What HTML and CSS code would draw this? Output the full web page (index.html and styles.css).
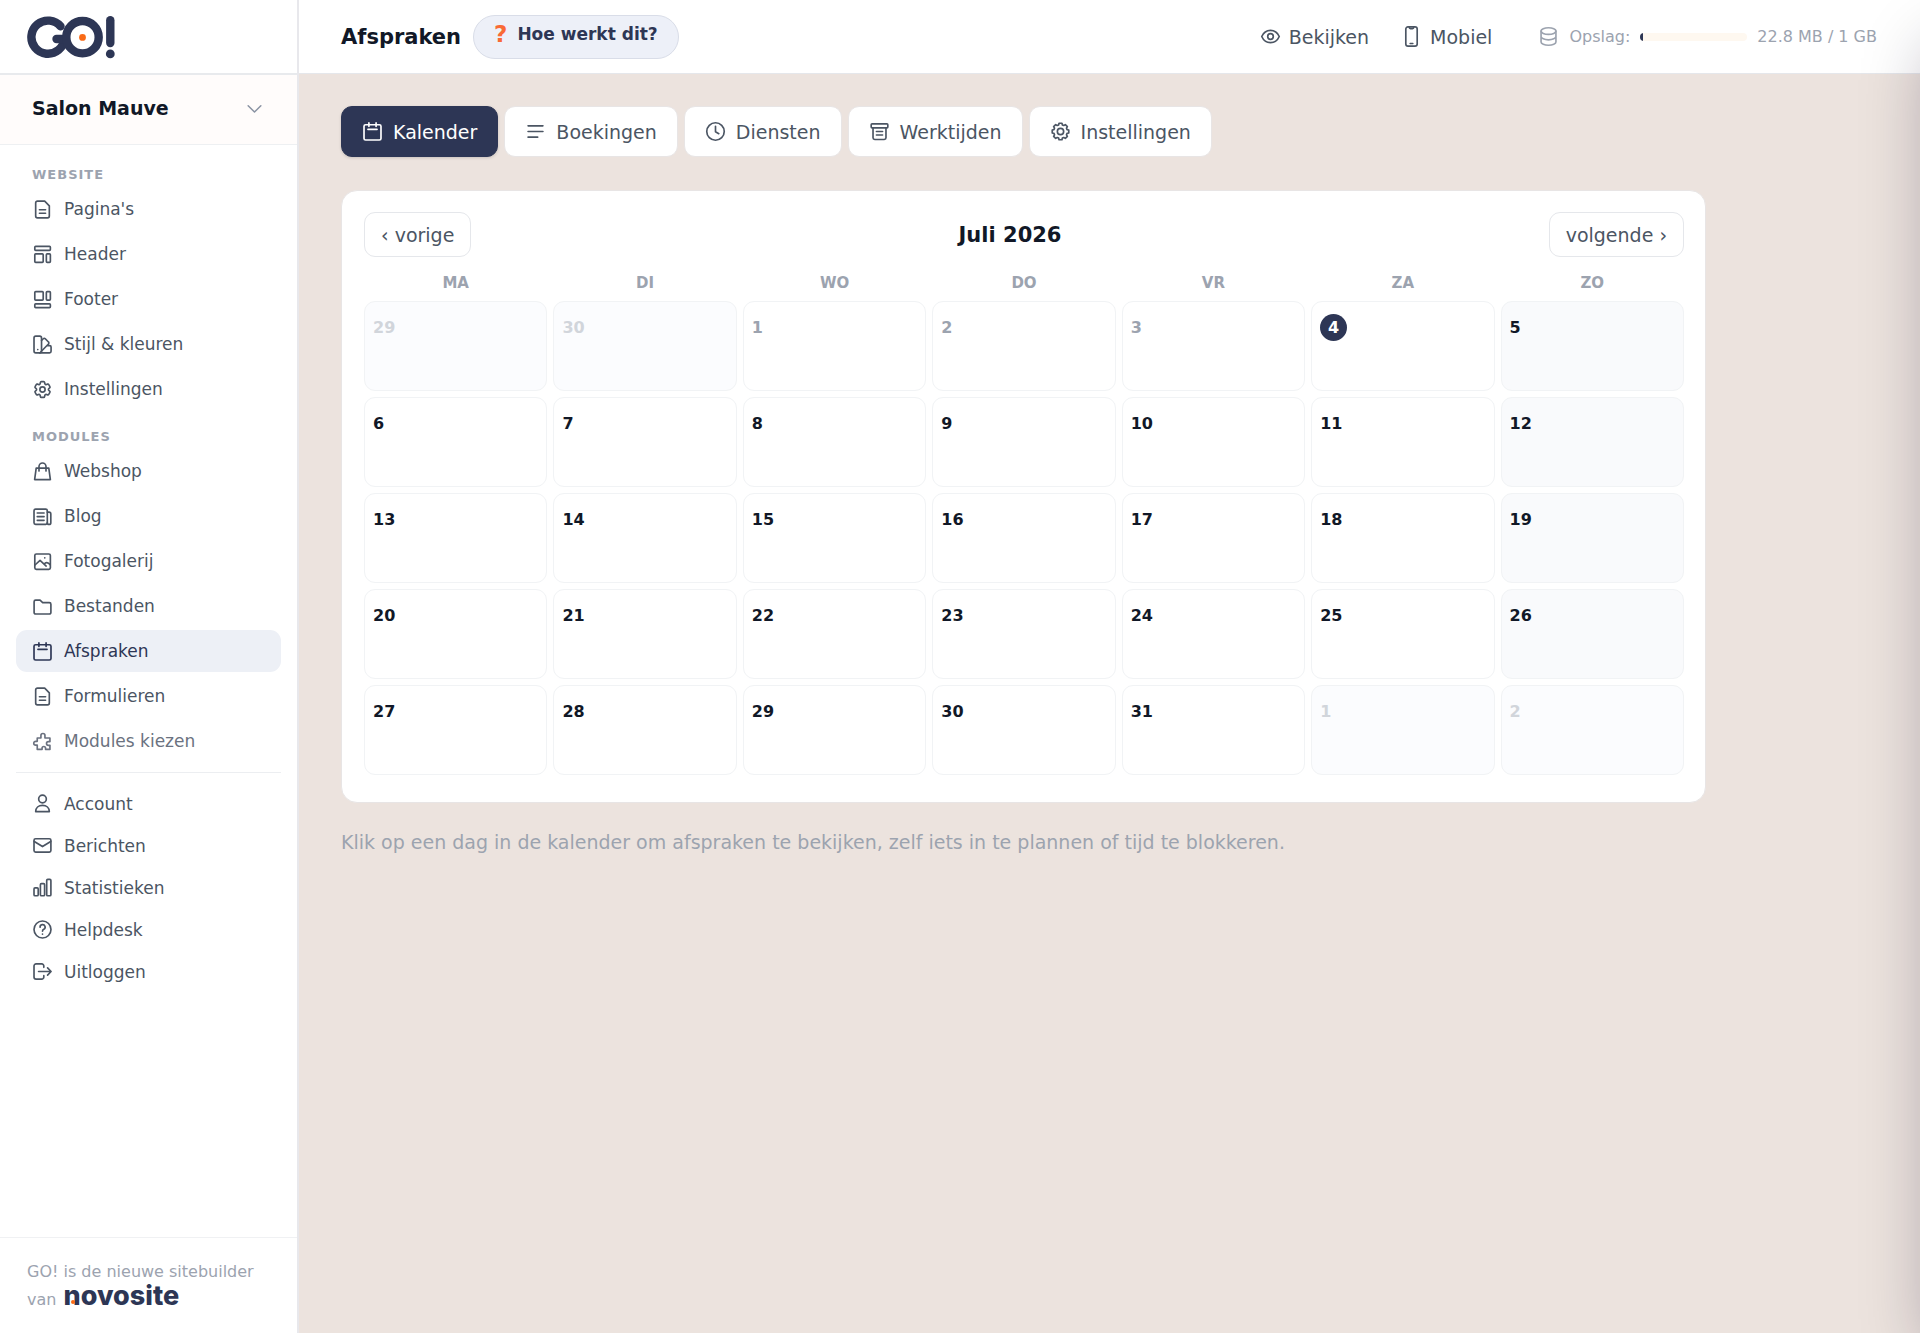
FILE: index.html
```
<!DOCTYPE html>
<html lang="nl">
<head>
    <meta charset="UTF-8">
    <meta name="viewport" content="width=device-width, initial-scale=1.0">
    <title>Afspraken - GO!</title>
    <link rel="stylesheet" href="styles.css">
</head>
<body>
    <!-- Icons used more than once -->
    <svg class="sprite" aria-hidden="true">
        <symbol id="icon-page" viewBox="0 0 24 24">
            <path d="M14.5 2.5H6.2a2 2 0 0 0-2 2v15a2 2 0 0 0 2 2h11.6a2 2 0 0 0 2-2V7.8z"/>
            <path d="M8.5 12.3h7M8.5 16.3h7"/>
        </symbol>
        <symbol id="icon-calendar" viewBox="0 0 24 24">
            <rect x="2.3" y="4.3" width="19.4" height="17.4" rx="1.8"/>
            <path d="M7.9 2.2v4M16.1 2.2v4M6.8 9.6h10.400"/>
        </symbol>
    </svg>

    <div class="layout">
        <aside class="sidebar">
            <a href="#" class="logo" aria-label="GO!">
                <svg width="88" height="43" viewBox="0 0 88 43">
                    <g fill="none" stroke="#2d3655" stroke-width="8.4" stroke-linecap="round">
                        <circle cx="21" cy="21.2" r="16.6" pathLength="360" stroke-dasharray="313 47" transform="rotate(6 21 21.2)"/>
                        <line x1="29.5" y1="23" x2="36.5" y2="23"/>
                        <circle cx="55.5" cy="21.2" r="16.2"/>
                        <line x1="83.3" y1="4.3" x2="83.3" y2="27"/>
                    </g>
                    <circle cx="83.3" cy="37.9" r="4.4" fill="#2d3655"/>
                    <circle cx="55.5" cy="21.4" r="3.4" fill="#f96a16"/>
                </svg>
            </a>

            <button type="button" class="site-picker">
                Salon Mauve
                <svg class="chevron" viewBox="0 0 24 24"><path d="M4 8.5l8 8 8-8"/></svg>
            </button>

            <nav class="nav">
                <h2>Website</h2>
                <a href="#"><svg><use href="#icon-page"/></svg>Pagina's</a>
                <a href="#">
                    <svg viewBox="0 0 24 24"><rect x="3.2" y="2.8" width="17.8" height="4.4" rx="1"/><rect x="3.2" y="11.2" width="9.6" height="9.8" rx="1"/><rect x="16.4" y="11.2" width="4.6" height="9.8" rx="1"/></svg>
                    Header
                </a>
                <a href="#">
                    <svg viewBox="0 0 24 24"><rect x="3.2" y="3" width="9.6" height="9.8" rx="1"/><rect x="16.4" y="3" width="4.6" height="9.8" rx="1"/><rect x="3.2" y="17" width="17.8" height="4.2" rx="1"/></svg>
                    Footer
                </a>
                <a href="#">
                    <svg viewBox="0 0 24 24"><rect x="2.3" y="2.5" width="8.6" height="19" rx="2"/><path d="M10.9 7.4l2-2a1.6 1.6 0 0 1 2.3 0l3.6 3.7a1.6 1.6 0 0 1 0 2.3l-8.6 8.9M17.2 13.2h3a1.6 1.6 0 0 1 1.6 1.6v5a1.7 1.7 0 0 1-1.7 1.7H8.5M6.6 17.7v.1"/></svg>
                    Stijl &amp; kleuren
                </a>
                <a href="#">
                    <svg viewBox="0 0 24 24"><path d="M9.594 3.94c.09-.542.56-.94 1.11-.94h2.593c.55 0 1.02.398 1.11.94l.213 1.281c.063.374.313.686.645.87.074.04.147.083.22.127.325.196.72.257 1.075.124l1.217-.456a1.125 1.125 0 0 1 1.37.49l1.296 2.247a1.125 1.125 0 0 1-.26 1.431l-1.003.827c-.293.241-.438.613-.43.992a7.723 7.723 0 0 1 0 .255c-.008.378.137.75.43.991l1.004.827c.424.35.534.955.26 1.43l-1.298 2.247a1.125 1.125 0 0 1-1.369.491l-1.217-.456c-.355-.133-.75-.072-1.076.124a6.47 6.47 0 0 1-.22.128c-.331.183-.581.495-.644.869l-.213 1.281c-.09.543-.56.94-1.11.94h-2.594c-.55 0-1.019-.398-1.11-.94l-.213-1.281c-.062-.374-.312-.686-.644-.87a6.52 6.52 0 0 1-.22-.127c-.325-.196-.72-.257-1.076-.124l-1.217.456a1.125 1.125 0 0 1-1.369-.49l-1.297-2.247a1.125 1.125 0 0 1 .26-1.431l1.004-.827c.292-.24.437-.613.43-.991a6.932 6.932 0 0 1 0-.255c.007-.38-.138-.751-.43-.992l-1.004-.827a1.125 1.125 0 0 1-.26-1.43l1.297-2.247a1.125 1.125 0 0 1 1.37-.491l1.216.456c.356.133.751.072 1.076-.124.072-.044.146-.086.22-.128.332-.183.582-.495.644-.869l.214-1.28z"/><circle cx="12" cy="12" r="3"/></svg>
                    Instellingen
                </a>

                <h2>Modules</h2>
                <a href="#">
                    <svg viewBox="0 0 24 24"><path d="M4.8 8.2h14.4l1.8 13H3zM8 11.5V6.3a4 4 0 0 1 8 0v5.2"/></svg>
                    Webshop
                </a>
                <a href="#">
                    <svg viewBox="0 0 24 24"><rect x="2.3" y="3.5" width="15.2" height="17.5" rx="1.8"/><path d="M17.5 7h2a2 2 0 0 1 2 2v10a2 2 0 0 1-4 0M6 8h7.8M6 12.2h7.8M6 16.4h7.8"/></svg>
                    Blog
                </a>
                <a href="#">
                    <svg viewBox="0 0 24 24"><rect x="3.2" y="3.4" width="17.8" height="17.6" rx="1.8"/><path d="M3.4 16l5.8-5.2 7 6.400M14.200 14.800c1-2 4-2.600 6.600 1M14.600 7.800v.1"/></svg>
                    Fotogalerij
                </a>
                <a href="#">
                    <svg viewBox="0 0 24 24"><path d="M2.4 18.8V6.6a1.8 1.8 0 0 1 1.8-1.8h5l3 2.8h7.6a1.8 1.8 0 0 1 1.8 1.8v9.4a1.8 1.8 0 0 1-1.8 1.8H4.2a1.8 1.8 0 0 1-1.8-1.8z"/></svg>
                    Bestanden
                </a>
                <a href="#" class="active"><svg><use href="#icon-calendar"/></svg>Afspraken</a>
                <a href="#"><svg><use href="#icon-page"/></svg>Formulieren</a>
                <a href="#" class="muted">
                    <svg viewBox="0 0 24 24"><path d="M6 8h4.2V5.2a2.3 2.3 0 0 1 4.6 0V8H20.5v4.2h-1.8a2 2 0 0 0 0 4.2h1.8V21h-5v-1.3a2 2 0 0 0-4 0V21H6v-4.8H4.2a2.2 2.2 0 0 1 0-4.4H6z"/></svg>
                    Modules kiezen
                </a>

                <div class="nav-account">
                    <a href="#">
                        <svg viewBox="0 0 24 24"><circle cx="12" cy="6.8" r="4.4"/><path d="M4.2 21.3c0-4.4 3.2-7.2 7.8-7.2s7.8 2.8 7.8 7.2z"/></svg>
                        Account
                    </a>
                    <a href="#">
                        <svg viewBox="0 0 24 24"><rect x="2.3" y="4.3" width="19.3" height="15.2" rx="1.8"/><path d="M2.6 7.4l9.4 5.8 9.4-5.8"/></svg>
                        Berichten
                    </a>
                    <a href="#">
                        <svg viewBox="0 0 24 24"><rect x="2.3" y="12.4" width="4.8" height="9" rx="1.2"/><rect x="9.6" y="7.6" width="4.8" height="13.8" rx="1.2"/><rect x="16.8" y="2.8" width="4.8" height="18.6" rx="1.2"/></svg>
                        Statistieken
                    </a>
                    <a href="#">
                        <svg viewBox="0 0 24 24"><circle cx="12" cy="12" r="9.7"/><path d="M9.2 9.3a2.9 2.9 0 1 1 4.3 2.5c-1 .5-1.5 1-1.5 2.2M12 17.2v.1"/></svg>
                        Helpdesk
                    </a>
                    <a href="#">
                        <svg viewBox="0 0 24 24"><path d="M13.5 7.2V5.7a2.4 2.4 0 0 0-2.4-2.4H4.7a2.4 2.4 0 0 0-2.4 2.4v12.6a2.4 2.4 0 0 0 2.4 2.4h6.4a2.4 2.4 0 0 0 2.4-2.4v-1.5M7.5 12h14M17.8 7.8l4 4.2-4 4.2"/></svg>
                        Uitloggen
                    </a>
                </div>
            </nav>

            <footer class="sidebar-footer">
                GO! is de nieuwe sitebuilder<br>
                van <a href="#" class="brand">novosite</a>
            </footer>
        </aside>

        <div class="content">
            <header class="topbar">
                <h1>Afspraken</h1>
                <button type="button" class="help-button"><span class="help-mark">?</span>Hoe werkt dit?</button>
                <div class="topbar-links">
                    <a href="#">
                        <svg viewBox="0 0 24 24"><path d="M2 12c2-4.6 5.6-7 10-7s8 2.400 10 7c-2 4.600-5.600 7-10 7s-8-2.400-10-7z"/><circle cx="12" cy="12" r="3.200"/></svg>
                        Bekijken
                    </a>
                    <a href="#">
                        <svg viewBox="0 0 24 24"><rect x="5.500" y="1" width="13" height="22" rx="2.500"/><path d="M9.500 1.500c0 1 .4 1.500 1.200 1.500h2.600c.8 0 1.200-.5 1.200-1.500M10.500 20h3"/></svg>
                        Mobiel
                    </a>
                </div>
                <div class="storage">
                    <svg viewBox="0 0 24 24"><ellipse cx="12" cy="5.800" rx="8.500" ry="3.800"/><path d="M3.500 5.800v12.400c0 2.100 3.800 3.800 8.500 3.800s8.500-1.700 8.500-3.800V5.800M3.500 12c0 2.100 3.800 3.800 8.500 3.800s8.500-1.700 8.500-3.800"/></svg>
                    <span>Opslag:</span>
                    <div class="storage-bar"><div class="storage-used" style="width: 2.2%"></div></div>
                    <span>22.8 MB / 1 GB</span>
                </div>
            </header>

            <main class="main">
                <nav class="tabs">
                    <a href="#" class="active"><svg><use href="#icon-calendar"/></svg>Kalender</a>
                    <a href="#">
                        <svg viewBox="0 0 24 24"><path d="M3.500 5.500h17M3.500 12h17M3.500 18.500h11"/></svg>
                        Boekingen
                    </a>
                    <a href="#">
                        <svg viewBox="0 0 24 24"><circle cx="12" cy="12" r="10"/><path d="M12 6v6.300l3.800 2.200"/></svg>
                        Diensten
                    </a>
                    <a href="#">
                        <svg viewBox="0 0 24 24"><rect x="2.500" y="3.200" width="19" height="4.600" rx="1"/><path d="M4.600 7.800v11.400a1.900 1.900 0 0 0 1.900 1.900h11a1.900 1.900 0 0 0 1.900-1.900V7.800M8.500 12h7M8.500 16h7"/></svg>
                        Werktijden
                    </a>
                    <a href="#">
                        <svg viewBox="0 0 24 24"><path d="M21.450 10.330v3.340l-1.950.48-.68 1.630 1.040 1.730-2.350 2.350-1.730-1.040-1.630.68-.48 1.950h-3.340l-.48-1.950-1.630-.68-1.730 1.040-2.350-2.350 1.040-1.730-.68-1.630-1.950-.48v-3.340l1.950-.48.68-1.630-1.040-1.730 2.350-2.350 1.730 1.040 1.630-.68.48-1.950h3.340l.48 1.950 1.630.68 1.730-1.040 2.350 2.350-1.040 1.730.68 1.630z"/><circle cx="12" cy="12" r="3.600"/></svg>
                        Instellingen
                    </a>
                </nav>

                <section class="calendar">
                    <div class="calendar-header">
                        <button type="button">‹ vorige</button>
                        <h2>Juli 2026</h2>
                        <button type="button">volgende ›</button>
                    </div>
                    <div class="weekdays">
                        <span>MA</span><span>DI</span><span>WO</span><span>DO</span><span>VR</span><span>ZA</span><span>ZO</span>
                    </div>
                    <div class="days">
                        <button type="button" class="outside">29</button>
                        <button type="button" class="outside">30</button>
                        <button type="button" class="past">1</button>
                        <button type="button" class="past">2</button>
                        <button type="button" class="past">3</button>
                        <button type="button"><span class="today">4</span></button>
                        <button type="button" class="closed">5</button>
                        <button type="button">6</button>
                        <button type="button">7</button>
                        <button type="button">8</button>
                        <button type="button">9</button>
                        <button type="button">10</button>
                        <button type="button">11</button>
                        <button type="button" class="closed">12</button>
                        <button type="button">13</button>
                        <button type="button">14</button>
                        <button type="button">15</button>
                        <button type="button">16</button>
                        <button type="button">17</button>
                        <button type="button">18</button>
                        <button type="button" class="closed">19</button>
                        <button type="button">20</button>
                        <button type="button">21</button>
                        <button type="button">22</button>
                        <button type="button">23</button>
                        <button type="button">24</button>
                        <button type="button">25</button>
                        <button type="button" class="closed">26</button>
                        <button type="button">27</button>
                        <button type="button">28</button>
                        <button type="button">29</button>
                        <button type="button">30</button>
                        <button type="button">31</button>
                        <button type="button" class="outside">1</button>
                        <button type="button" class="outside">2</button>
                    </div>
                </section>

                <p class="hint">Klik op een dag in de kalender om afspraken te bekijken, zelf iets in te plannen of tijd te blokkeren.</p>
            </main>
        </div>
    </div>

    <div class="help-panel"></div>
</body>
</html>
```

FILE: styles.css
```
* {
    box-sizing: border-box;
}

body {
    margin: 0;
    background-color: #ece3de;
    color: #111827;
    font-family: "DejaVu Sans", sans-serif;
    font-size: 19px;
}

a {
    color: inherit;
    text-decoration: none;
}

button {
    font: inherit;
    color: inherit;
    cursor: pointer;
}

h1, h2, p {
    margin: 0;
}

svg {
    fill: none;
    stroke: currentColor;
    stroke-width: 1.9;
    stroke-linecap: round;
    stroke-linejoin: round;
    flex-shrink: 0;
}

.sprite {
    display: none;
}

.layout {
    display: flex;
    min-height: 100vh;
}

/* Sidebar */
.sidebar {
    display: flex;
    flex-direction: column;
    width: 299px;
    flex-shrink: 0;
    background-color: #fff;
    border-right: 2px solid #e8e8ec;
}

.logo {
    display: flex;
    align-items: center;
    height: 75px;
    padding: 2px 0 0 27px;
    border-bottom: 2px solid #e8eaed;
}

.logo svg {
    stroke: none;
}

.site-picker {
    display: flex;
    align-items: center;
    justify-content: space-between;
    height: 70px;
    padding: 0 33px 3px 32px;
    border: none;
    border-bottom: 1px solid #eef0f2;
    background-color: #fffcfb;
    font-weight: bold;
}

.chevron {
    width: 19px;
    height: 19px;
    color: #8a93a3;
}

.nav {
    display: flex;
    flex-direction: column;
    gap: 3px;
    flex: 1;
    padding: 20px 16px;
    color: #4b5563;
    font-size: 17px;
}

.nav h2 {
    padding-left: 16px;
    color: #9ca3af;
    font-size: 13px;
    line-height: 20px;
    letter-spacing: 1px;
    text-transform: uppercase;
}

.nav a + h2 {
    margin-top: 14px;
}

.nav a {
    display: flex;
    align-items: center;
    gap: 11px;
    height: 42px;
    padding: 0 16px;
    border-radius: 11px;
}

.nav a svg, .tabs svg, .topbar-links svg, .storage svg {
    width: 21px;
    height: 21px;
}

.nav a.active {
    background-color: #edf0f6;
    color: #2d3655;
}

.nav a.muted {
    color: #6b7280;
}

.nav-account {
    display: flex;
    flex-direction: column;
    gap: 3px;
    margin-top: 7px;
    padding-top: 11px;
    border-top: 1px solid #eceef1;
}

.nav-account a {
    height: 39px;
}

.sidebar-footer {
    padding: 20px 27px 19px;
    border-top: 1px solid #f0f1f3;
    color: #9ca3af;
    font-size: 16px;
    line-height: 28px;
}

.brand {
    position: relative;
    margin-left: 2px;
    color: #2d3655;
    font-family: Inter, sans-serif;
    font-size: 27px;
    font-weight: 800;
    line-height: 20px;
}

/* orange dot inside the n */
.brand::before {
    content: "";
    position: absolute;
    left: 7px;
    bottom: 8px;
    width: 4px;
    height: 4px;
    border-radius: 50%;
    background-color: #f96a16;
}

/* Top bar */
.content {
    flex: 1;
    min-width: 0;
}

.topbar {
    display: flex;
    align-items: center;
    height: 74px;
    padding: 0 43px 0 42px;
    background-color: #fff;
    border-bottom: 1px solid #e5e7eb;
}

.topbar h1 {
    font-size: 21px;
}

.help-button {
    display: flex;
    align-items: center;
    gap: 10px;
    height: 44px;
    margin-left: 12px;
    padding: 0 20px 5px;
    border: 1px solid #d9dde8;
    border-radius: 22px;
    background-color: #edf0f8;
    color: #2d3655;
    font-size: 17px;
    font-weight: bold;
}

.help-mark {
    color: #f96a35;
    font-size: 23px;
}

.topbar-links {
    display: flex;
    gap: 32px;
    margin-left: auto;
    color: #4b5563;
}

.topbar-links a {
    display: flex;
    align-items: center;
    gap: 8px;
}

.storage {
    display: flex;
    align-items: center;
    gap: 10px;
    margin-left: 46px;
    color: #9ca3af;
    font-size: 16px;
}

.storage-bar {
    width: 107px;
    height: 8px;
    border-radius: 4px;
    background-color: #fef8f0;
    overflow: hidden;
}

.storage-used {
    height: 100%;
    background-color: #2d3655;
}

/* Tabs */
.main {
    padding: 32px 42px;
}

.tabs {
    display: flex;
    gap: 6px;
    margin-bottom: 33px;
}

.tabs a {
    display: flex;
    align-items: center;
    gap: 10px;
    height: 51px;
    padding: 0 20px;
    border: 1px solid #e8e5e5;
    border-radius: 11px;
    background-color: #fff;
    color: #4b5563;
}

.tabs a.active {
    border-color: #2d3655;
    background-color: #2d3655;
    color: #fff;
    box-shadow: 0 1px 3px rgba(0, 0, 0, 0.15);
}

/* Calendar */
.calendar {
    max-width: 1365px;
    padding: 21px 21px 27px 22px;
    border: 1px solid #e8e5e5;
    border-radius: 16px;
    background-color: #fff;
}

.calendar-header {
    display: flex;
    align-items: center;
    justify-content: space-between;
}

.calendar-header h2 {
    font-size: 21px;
}

.calendar-header button {
    height: 45px;
    padding: 0 16px;
    border: 1px solid #e5e7eb;
    border-radius: 11px;
    background-color: #fff;
    color: #4b5563;
}

.weekdays, .days {
    display: grid;
    grid-template-columns: repeat(7, 1fr);
    gap: 6px;
}

.weekdays {
    padding: 16px 0 8px;
    color: #9ca3af;
    font-size: 15px;
    font-weight: bold;
    line-height: 20px;
    text-align: center;
}

.days button {
    display: flex;
    align-items: flex-start;
    height: 90px;
    padding: 12px 8px;
    border: 1px solid #f1f3f5;
    border-radius: 11px;
    background-color: #fff;
    color: #111827;
    font-size: 16px;
    font-weight: bold;
    line-height: 27px;
}

.days button.closed {
    background-color: #f9fafc;
}

.days button.outside {
    background-color: #fbfcfe;
    color: #d1d5db;
}

.days button.past {
    color: #9ca3af;
}

.today {
    width: 27px;
    height: 27px;
    border-radius: 50%;
    background-color: #2d3655;
    color: #fff;
    text-align: center;
}

.hint {
    margin-top: 28px;
    color: #9ca3af;
}

.help-panel {
    position: fixed;
    top: 0;
    left: 100%;
    width: 560px;
    height: 100vh;
    box-shadow: 0 33px 67px -14px rgba(17, 10, 39, 0.33);
}
```
